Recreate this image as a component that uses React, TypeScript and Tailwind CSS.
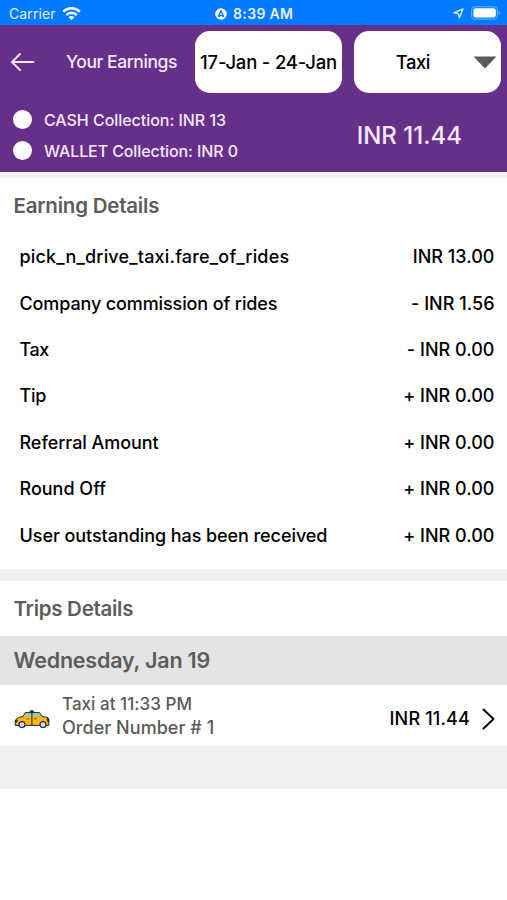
import { useState } from "react";

const earnings = [
  { label: "pick_n_drive_taxi.fare_of_rides", amount: "INR 13.00", tracking: "tracking-[0.18px]" },
  { label: "Company commission of rides", amount: "- INR 1.56", tracking: "tracking-[-0.12px]" },
  { label: "Tax", amount: "- INR 0.00", tracking: "tracking-[-0.4px]" },
  { label: "Tip", amount: "+ INR 0.00", tracking: "tracking-[-0.3px]" },
  { label: "Referral Amount", amount: "+ INR 0.00", tracking: "tracking-[-0.05px]" },
  { label: "Round Off", amount: "+ INR 0.00", tracking: "tracking-[0px]" },
  { label: "User outstanding has been received", amount: "+ INR 0.00", tracking: "tracking-[-0.07px]" },
];

const StatusBar = () => {
  return (
    <div className="relative flex h-[25px] items-center justify-between bg-[#007aff] pl-[9px] pr-[6px] pt-[3px] text-[#e4f1ff]">
      <div className="flex items-center gap-[6px]">
        <span className="text-[14px] font-normal leading-[20px] tracking-[0.1px]">Carrier</span>
        <svg width="19" height="15" viewBox="0 0 19 15" fill="none" stroke="white" strokeWidth="2.5" className="-mt-[2px]">
          <path d="M1.2 5.6C5.8 1 13.2 1 17.8 5.6" />
          <path d="M4.3 9C7.2 6.1 11.8 6.1 14.7 9" />
          <path d="M9.5 14.2L6.5 11.2C8.2 9.6 10.8 9.6 12.5 11.2Z" fill="white" stroke="none" />
        </svg>
      </div>
      <div className="absolute left-[215px] top-[4px] flex items-center gap-[6px]">
        <svg width="12" height="12" viewBox="0 0 12 12">
          <circle cx="6" cy="6" r="5.8" fill="white" />
          <path d="M6 2.6L8.6 8.6L6 7.2L3.4 8.6Z" fill="none" stroke="#007aff" strokeWidth="1.3" strokeLinejoin="round" />
        </svg>
        <span className="text-[14px] font-semibold leading-[20px] tracking-[0.35px]">8:39 AM</span>
      </div>
      <div className="flex items-center gap-[7px]">
        <svg width="11" height="11" viewBox="0 0 11 11" fill="none" stroke="#cfe5ff" strokeWidth="1.5" strokeLinejoin="round" className="-mt-[1px]">
          <path d="M10 1L6.4 9.8L5.2 5.8L1 4.8Z" />
        </svg>
        <svg width="30" height="14" viewBox="0 0 30 14" className="-mt-[2px]">
          <rect x="0.6" y="0.6" width="25.8" height="12.6" rx="3.8" fill="none" stroke="#5cabff" strokeWidth="1.2" />
          <rect x="2.4" y="2.2" width="22.4" height="9.4" rx="2.4" fill="white" />
          <path d="M27.6 4.6C29.4 5.3 29.4 8.5 27.6 9.2Z" fill="#5cabff" />
        </svg>
      </div>
    </div>
  );
};

const TaxiIcon = () => {
  return (
    <svg width="36" height="20" viewBox="0 0 36 20" strokeLinejoin="round" strokeLinecap="round">
      <path d="M15.6 3.2C15.6 1 20 1 20 3.2Z" fill="#4a4433" stroke="#20242b" strokeWidth="1" />
      <path d="M1.2 16V12C2.4 8.6 6 7.8 9 7.6L11.2 3.6H25.4L28.8 7.8C32.4 8 34.4 8.4 34.8 10V16Z" fill="#fbb414" stroke="#20242b" strokeWidth="1" />
      <path d="M10.4 7.6L12.2 4.2H17.2V7.6Z" fill="#7fd4d2" />
      <path d="M18.6 4.2H24.8L27.4 7.6H18.6Z" fill="#7fd4d2" />
      <path d="M17.9 3.6V15.8" fill="none" stroke="#20242b" strokeWidth="1" />
      <path d="M13 9.8H15M20.4 9.8H22.4" fill="none" stroke="#5c4a1c" strokeWidth="0.8" />
      <path d="M1 12L4 10.4L3.2 13.4H1ZM32.6 9.2H35V13H33.6Z" fill="#20242b" />
      <circle cx="8" cy="15.6" r="3" fill="#dfe9f5" stroke="#20242b" strokeWidth="1.1" />
      <circle cx="29" cy="15.6" r="3" fill="#dfe9f5" stroke="#20242b" strokeWidth="1.1" />
      <circle cx="8" cy="15.6" r="1" fill="#b4c6da" />
      <circle cx="29" cy="15.6" r="1" fill="#b4c6da" />
    </svg>
  );
};

const App = () => {
  const [vehicle] = useState("Taxi");

  return (
    <div className="flex h-[900px] w-[507px] flex-col bg-white font-['Inter',sans-serif] font-medium">
      <StatusBar />

      {/* header */}
      <div className="h-[147px] bg-[#66308a] text-[#f7e8ff]">
        <div className="flex h-[74px] items-center pl-[11px] pr-[6px]">
          <svg width="24" height="20" viewBox="0 0 24 20" fill="none" stroke="currentColor" strokeWidth="1.8" strokeLinecap="round" strokeLinejoin="round" className="cursor-pointer">
            <path d="M22.5 10H1.2M9 2L1 10L9 18" />
          </svg>
          <div className="ml-[31px] w-[129px] pt-[1px] text-[17.5px] tracking-[-0.42px] whitespace-nowrap">Your Earnings</div>
          <div className="flex h-[62px] w-[147px] items-center justify-center rounded-[15px] bg-white pt-[1px] text-[18.5px] tracking-[-0.2px] whitespace-nowrap text-black">
            17-Jan - 24-Jan
          </div>
          <div className="ml-[12px] flex h-[62px] w-[147px] items-center justify-end rounded-[15px] bg-white pr-[4px] pt-[1px] text-[18.5px] tracking-[-0.5px] text-black">
            <span>{vehicle}</span>
            <svg width="24" height="13" viewBox="0 0 24 13" className="-mt-[1px] ml-[43px]">
              <path d="M0.5 0.5H23.5L12 12.5Z" fill="#5b5b5b" />
            </svg>
          </div>
        </div>
        <div className="flex justify-between pl-[13px] pr-[45px]">
          <div className="flex flex-col pt-[5px] text-[16px]">
            <div className="flex h-[31px] items-center gap-[12px] tracking-[-0.04px]">
              <span className="h-[19px] w-[19px] rounded-full bg-white" />
              CASH Collection: INR 13
            </div>
            <div className="flex h-[31px] items-center gap-[12px] tracking-[-0.1px]">
              <span className="h-[19px] w-[19px] rounded-full bg-white" />
              WALLET Collection: INR 0
            </div>
          </div>
          <div className="pt-[19px] text-[24px] leading-[36px]">INR 11.44</div>
        </div>
      </div>
      <div className="mt-[2px] h-[4px] bg-[#f0f0f0]" />

      {/* earning details */}
      <div className="h-[391px]">
        <div className="pl-[13.5px] pt-[13px] text-[20.5px] font-semibold leading-[30px] tracking-[-0.22px] text-[#5c5c5c]">Earning Details</div>
        <div className="pt-[12.5px]">
          {earnings.map((item) => (
            <div key={item.label} className="flex h-[46.4px] items-center justify-between pl-[19.5px] pr-[12.5px] text-[18px] text-black">
              <span className={item.tracking}>{item.label}</span>
              <span className="tracking-[0.02px]">{item.amount}</span>
            </div>
          ))}
        </div>
      </div>
      <div className="h-[12px] bg-[#f0f0f0]" />

      {/* trips */}
      <div className="flex h-[55px] items-center pl-[13.5px] pt-[1px] text-[20.5px] font-semibold tracking-[-0.28px] text-[#5c5c5c]">Trips Details</div>
      <div className="flex h-[49px] items-center bg-[#e4e4e4] pl-[13.5px] text-[21.5px] font-semibold tracking-[-0.2px] text-[#5c5c5c]">Wednesday, Jan 19</div>
      <div className="flex h-[61px] items-center pl-[14px] pr-[12px]">
        <div className="pt-[6px]">
          <TaxiIcon />
        </div>
        <div className="ml-[12px] flex-1 text-[#5a5a5a]">
          <div className="text-[17px] leading-[24px] tracking-[0.04px]">Taxi at 11:33 PM</div>
          <div className="text-[18px] leading-[24px] tracking-[0.04px]">Order Number # 1</div>
        </div>
        <div className="mt-[6px] text-[18px] tracking-[0.16px] text-black">INR 11.44</div>
        <svg width="13" height="22" viewBox="0 0 13 22" fill="none" stroke="black" strokeWidth="2" strokeLinecap="round" strokeLinejoin="round" className="ml-[12px] mt-[6px]">
          <path d="M1.5 1.5L11.5 11L1.5 20.5" />
        </svg>
      </div>
      <div className="h-[43px] bg-[#f0f0f0]" />
    </div>
  );
};

export default App;
